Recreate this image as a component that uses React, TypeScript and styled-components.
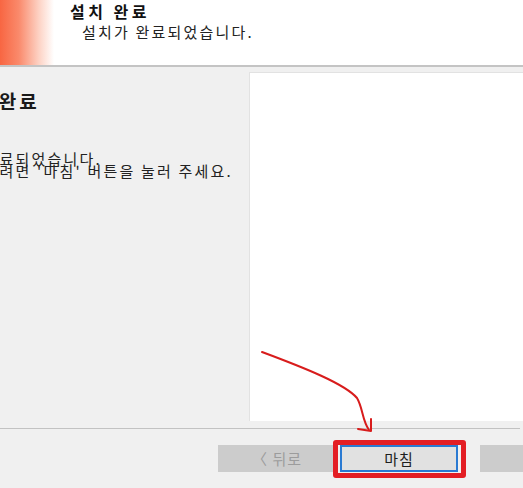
import { FC } from 'react';
import styled, { createGlobalStyle } from 'styled-components';

const GlobalStyle = createGlobalStyle`
  html, body {
    margin: 0;
    padding: 0;
    background: #f0f0f0;
    overflow: hidden;
  }
  body {
    font-family: 'Noto Sans CJK KR', 'Noto Sans', sans-serif;
    color: #1a1a1a;
  }
`;

const App: FC = () => {
  return (
    <>
      <GlobalStyle />
      <Window>
        <Header>
          <Banner />
          <HeaderText>
            <HeaderTitle>설치 완료</HeaderTitle>
            <HeaderSub>설치가 완료되었습니다.</HeaderSub>
          </HeaderText>
        </Header>

        <Body>
          <LeftPane>
            <LeftContent>
              <PaneTitle>설치가 완료</PaneTitle>
              <PaneText>
                설치가 완료되었습니다.
                <br />
                창을 닫으려면 '마침' 버튼을 눌러 주세요.
              </PaneText>
            </LeftContent>
          </LeftPane>
          <InfoPanel />
        </Body>

        <Separator />

        <Footer>
          <WizardButton $disabled>〈 뒤로</WizardButton>
          <WizardButton $primary $highlight>
            마침
          </WizardButton>
          <WizardButton $disabled>취소</WizardButton>
        </Footer>

        <Annotation viewBox="0 0 523 488" width="523" height="488">
          <path
            d="M262 352 C 305 368, 345 384, 357 398 C 363 408, 362 420, 369 430"
            fill="none"
            stroke="#d81c1c"
            strokeWidth="2"
            strokeLinecap="round"
          />
          <path
            d="M371 419 L371 431 L358 429"
            fill="none"
            stroke="#d81c1c"
            strokeWidth="2"
            strokeLinecap="round"
            strokeLinejoin="round"
          />
        </Annotation>
      </Window>
    </>
  );
};
export default App;

const Window = styled.div`
  position: relative;
  width: 523px;
  height: 488px;
  display: flex;
  flex-direction: column;
  background: #f0f0f0;
  overflow: hidden;
`;

const Header = styled.div`
  display: flex;
  height: 65px;
  flex-shrink: 0;
  background: #ffffff;
  border-bottom: 2px solid #c4c4c4;
`;

const Banner = styled.div`
  width: 54px;
  flex-shrink: 0;
  background: linear-gradient(to right, #f86642 0%, #fa8a6c 35%, #fdd2c4 72%, #ffffff 100%);
`;

const HeaderText = styled.div`
  display: flex;
  flex-direction: column;
  padding: 1px 0 0 16px;
`;

const HeaderTitle = styled.div`
  font-size: 16px;
  font-weight: 700;
  line-height: 20px;
  letter-spacing: 3.5px;
  color: #111;
`;

const HeaderSub = styled.div`
  margin: 1px 0 0 12px;
  font-size: 15px;
  line-height: 20px;
  letter-spacing: 2.2px;
  color: #222;
`;

const Body = styled.div`
  display: flex;
  height: 361px;
  flex-shrink: 0;
`;

const LeftPane = styled.div`
  width: 249px;
  flex-shrink: 0;
  overflow: hidden;
`;

const LeftContent = styled.div`
  margin-left: -70px;
  padding-top: 21px;
  white-space: nowrap;
`;

const PaneTitle = styled.div`
  font-size: 19px;
  font-weight: 700;
  line-height: 26px;
  letter-spacing: 3px;
  color: #1a1a1a;
`;

const PaneText = styled.div`
  margin-top: 39px;
  font-size: 15px;
  line-height: 12px;
  letter-spacing: 2.2px;
  color: #222;
`;

const InfoPanel = styled.div`
  flex: 1;
  margin: 5px 0 7px;
  background: #ffffff;
  border-top: 1px solid #e2e2e2;
  border-left: 1px solid #e2e2e2;
`;

const Separator = styled.div`
  height: 1px;
  width: 520px;
  flex-shrink: 0;
  background: #c2c2c2;
`;

const Footer = styled.div`
  display: flex;
  align-items: center;
  padding: 16px 0 0 218px;
  gap: 4px;

  & > :last-child {
    margin-left: 18px;
  }
`;

const WizardButton = styled.div<{ $disabled?: boolean; $primary?: boolean; $highlight?: boolean }>`
  position: relative;
  flex-shrink: 0;
  width: 118px;
  height: 27px;
  box-sizing: border-box;
  display: flex;
  align-items: center;
  justify-content: center;
  font-size: 15px;
  letter-spacing: 1px;
  background: ${(p) => (p.$disabled ? '#cccccc' : '#e1e1e1')};
  color: ${(p) => (p.$disabled ? '#9c9c9c' : '#1e1e1e')};
  border: ${(p) => (p.$primary ? '2px solid #2a7ad2' : '1px solid #cccccc')};

  ${(p) =>
    p.$highlight &&
    `
    &::after {
      content: '';
      position: absolute;
      left: -9px;
      right: -10px;
      top: -7px;
      bottom: -8px;
      border: 5px solid #e31e24;
      border-radius: 3px;
    }
  `}
`;

const Annotation = styled.svg`
  position: absolute;
  left: 0;
  top: 0;
  pointer-events: none;
`;
